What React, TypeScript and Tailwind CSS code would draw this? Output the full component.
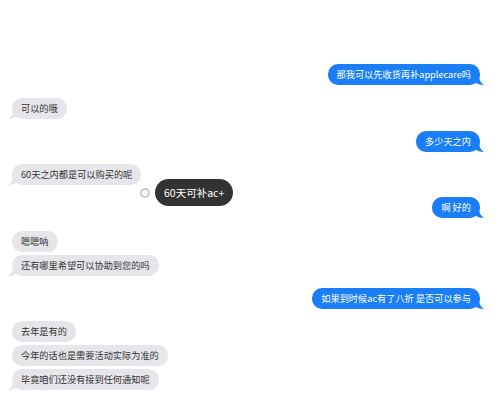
import React from "react";

type Msg = { text: string; me: boolean; tail: boolean; mt: string };

const msgs: Msg[] = [
  { text: "那我可以先收货再补applecare吗", me: true, tail: true, mt: "mt-0" },
  { text: "可以的哦", me: false, tail: true, mt: "mt-[13px]" },
  { text: "多少天之内", me: true, tail: true, mt: "mt-[12px]" },
  { text: "60天之内都是可以购买的呢", me: false, tail: true, mt: "mt-[12px]" },
  { text: "啊 好的", me: true, tail: true, mt: "mt-[12px]" },
  { text: "嗯嗯呐", me: false, tail: false, mt: "mt-[13px]" },
  { text: "还有哪里希望可以协助到您的吗", me: false, tail: true, mt: "mt-[3px]" },
  { text: "如果到时候ac有了八折 是否可以参与", me: true, tail: true, mt: "mt-[12px]" },
  { text: "去年是有的", me: false, tail: false, mt: "mt-[12px]" },
  { text: "今年的话也是需要活动实际为准的", me: false, tail: false, mt: "mt-[3px]" },
  { text: "毕竟咱们还没有接到任何通知呢", me: false, tail: true, mt: "mt-[3px]" },
];

function Bubble({ m }: { m: Msg }) {
  return (
    <div className={`flex ${m.me ? "justify-end" : "justify-start"} ${m.mt}`}>
      <div
        className={`relative h-[21px] rounded-[10px] px-[9px] text-[9.2px] leading-[21px] whitespace-nowrap ${
          m.me ? "bg-[#1a7ff7] text-white" : "bg-[#e6e6ea] text-[#333333]"
        }`}
      >
        {m.text}
        {m.tail && m.me && (
          <svg className="absolute right-[-4px] bottom-0" width="9" height="9" viewBox="0 0 9 9">
            <path d="M0 0 L4 0 C4 4 6 7 9 9 C5 9 2 8 0 6 Z" fill="#1a7ff7" />
          </svg>
        )}
        {m.tail && !m.me && (
          <svg className="absolute left-[-4px] bottom-0" width="9" height="9" viewBox="0 0 9 9">
            <path d="M9 0 L5 0 C5 4 3 7 0 9 C4 9 7 8 9 6 Z" fill="#e6e6ea" />
          </svg>
        )}
      </div>
    </div>
  );
}

export default function App() {
  return (
    <div
      className="relative w-[503px] h-[416px] bg-white overflow-hidden"
      style={{ fontFamily: '"Noto Sans CJK SC", "Noto Sans", sans-serif' }}
    >
      <div className="flex flex-col pt-[64px] pl-[12px] pr-[23px]">
        {msgs.map((m, i) => (
          <Bubble key={i} m={m} />
        ))}
      </div>
      <div className="absolute left-[140px] top-[179px] flex items-center gap-[5px]">
        <div className="w-[10px] h-[10px] rounded-full border-[2.5px] border-[#c8c8c8] bg-white" />
        <div className="h-[27px] rounded-full bg-[#333333] px-[9px] text-[10.5px] leading-[27px] text-white whitespace-nowrap">
          60天可补ac+
        </div>
      </div>
    </div>
  );
}
